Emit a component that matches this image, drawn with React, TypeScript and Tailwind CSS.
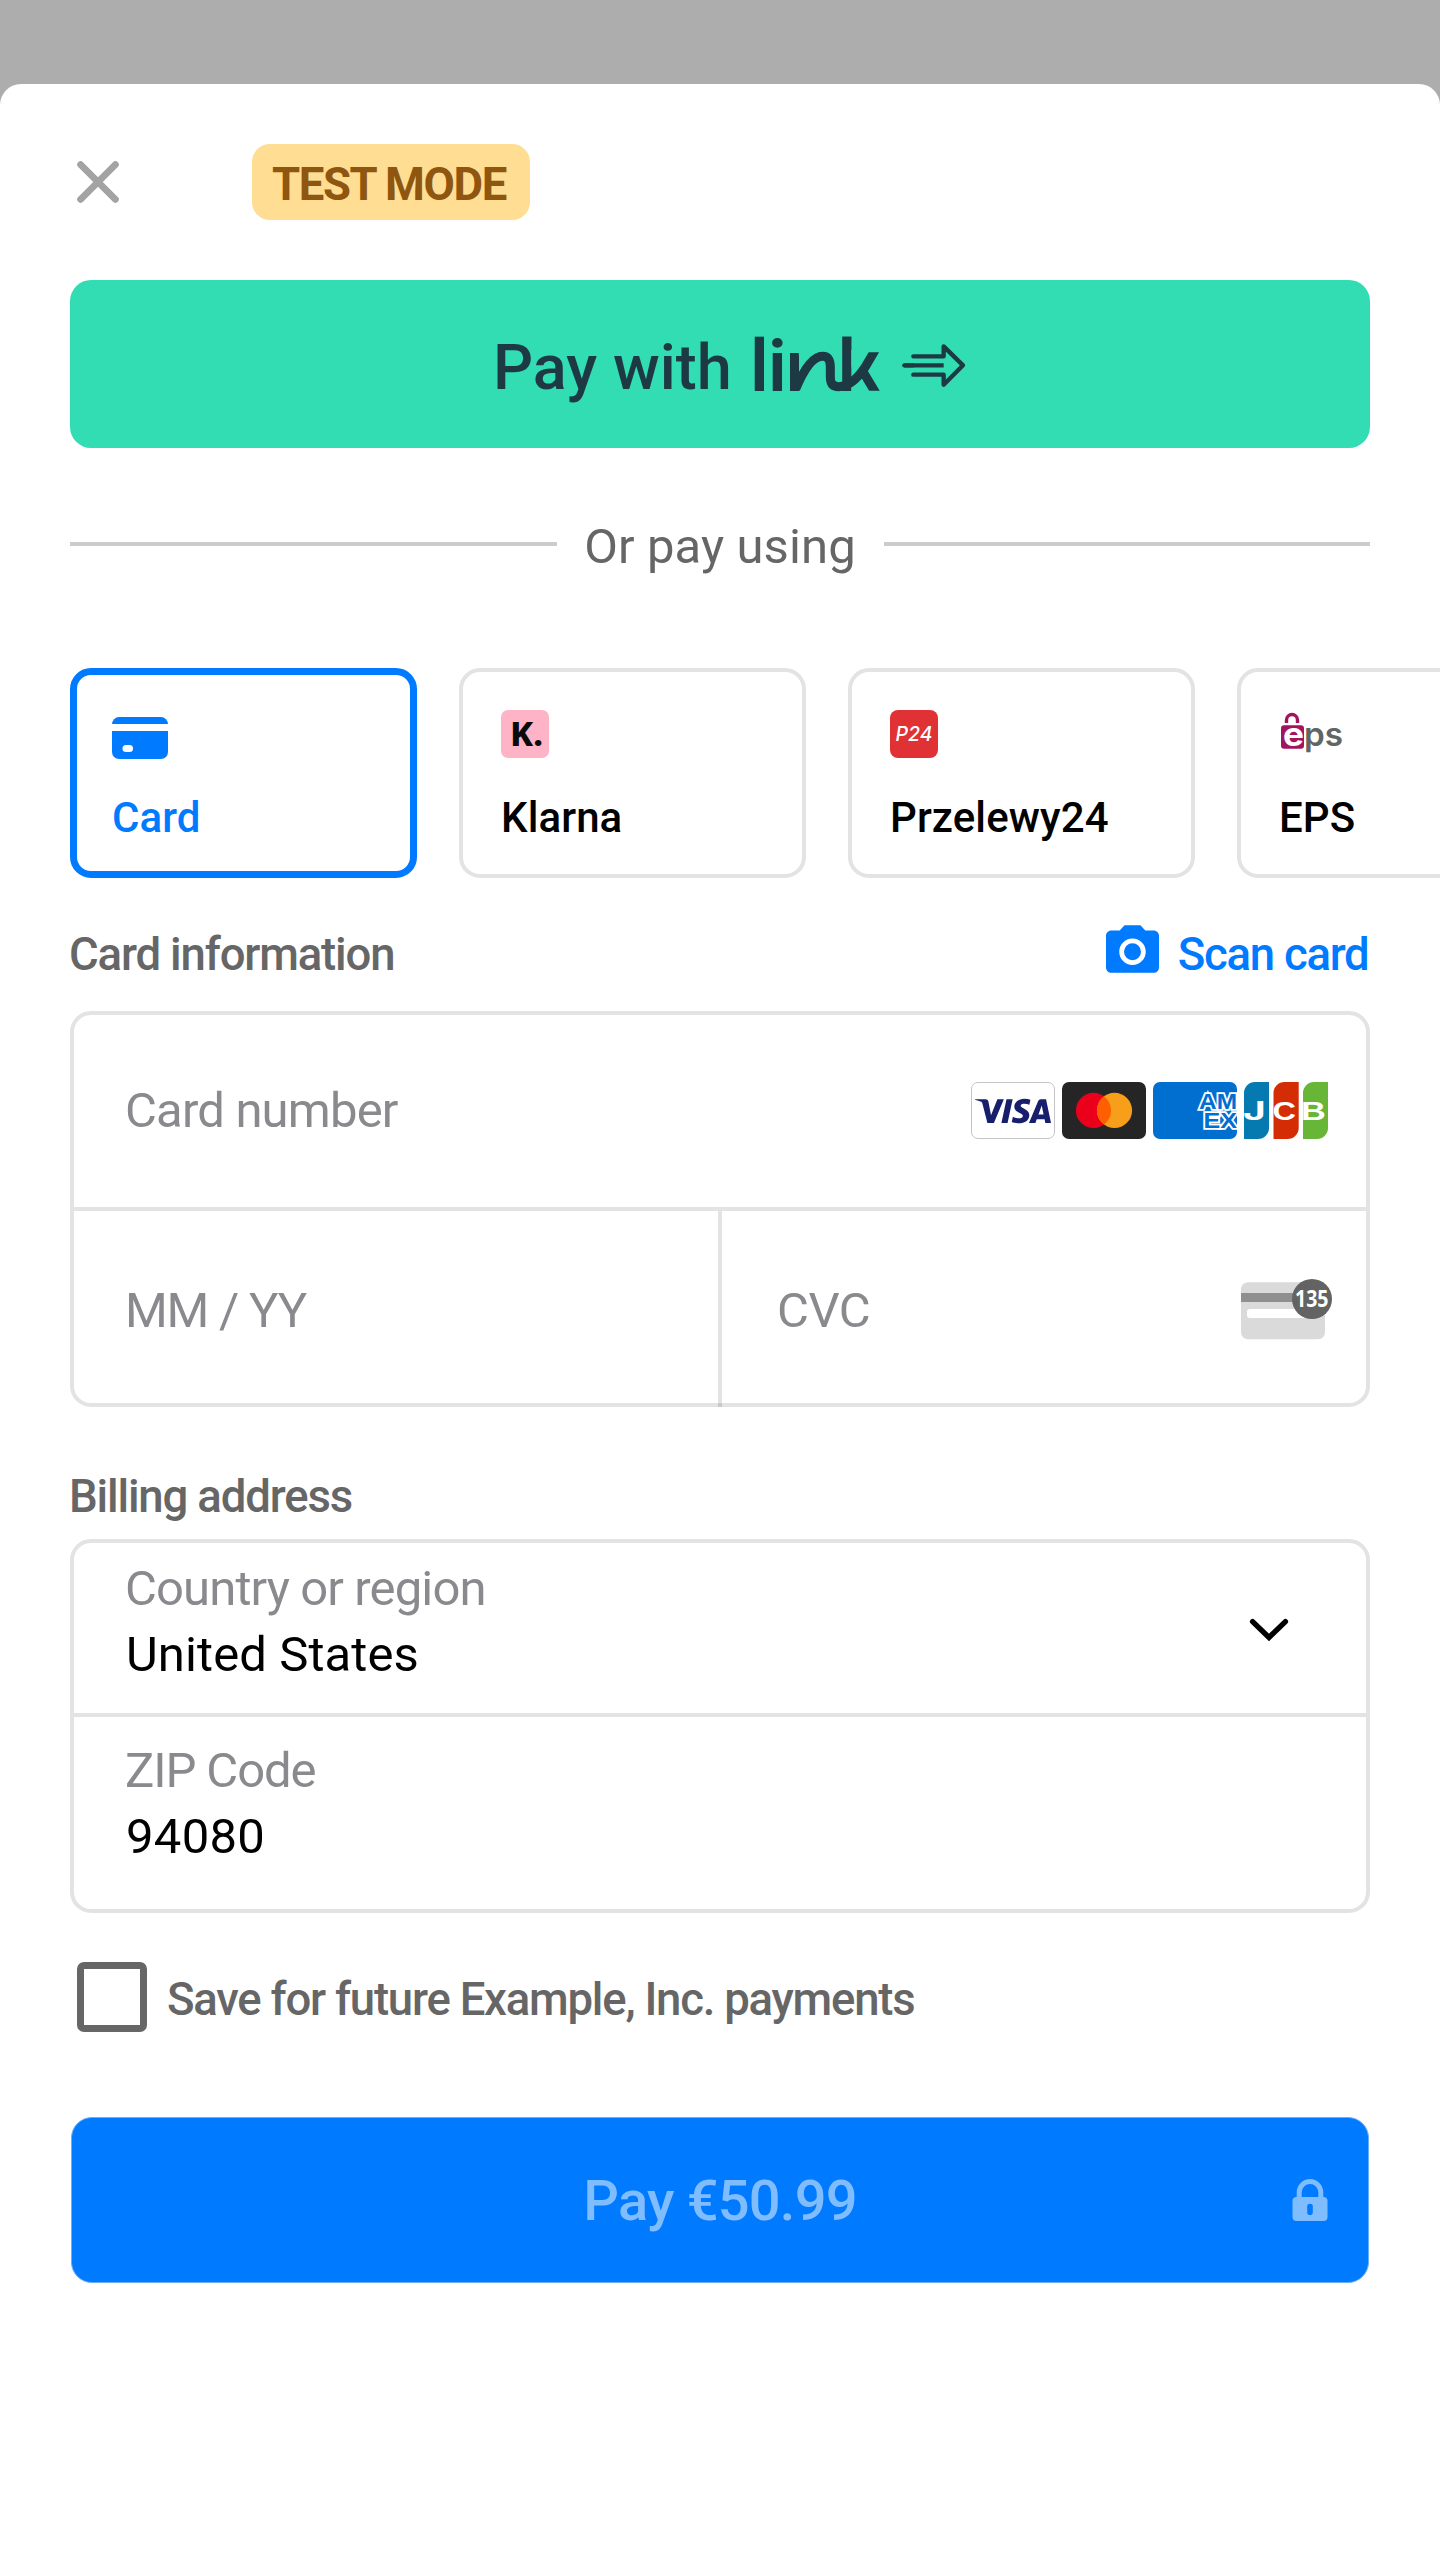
import type { ReactNode } from "react";
import { SiVisa } from "react-icons/si";

function CloseIcon() {
  return (
    <svg className="h-[42px] w-[42px]" viewBox="0 0 42 42" fill="none" stroke="#a3a3a3" strokeWidth="6.8" strokeLinecap="round">
      <path d="M3.6 3.6 38.4 38.4M38.4 3.6 3.6 38.4" />
    </svg>
  );
}

function LinkLogo() {
  return (
    <svg className="mb-[3px] h-[58px] w-[214px] overflow-visible" viewBox="820 38 642 174" fill="none">
      <text x="811 865 919 1075" y="208" fill="#1d3944" fontFamily="Roboto, sans-serif" fontSize="216" fontWeight="650">
        link
      </text>
      <path d="M958 85H1075V214H958ZM1115 85H1215V214H1115Z" fill="#33ddb3" />
      <g stroke="#1d3944" strokeWidth="27">
        <path d="M948 203C966 160 995 104 1029 104.5C1047 105 1052 118 1052 138V166C1052 186 1059 196 1077 196C1108 196 1136 168 1156 138L1190 80" />
        <path d="M1148 148 1189 216" />
      </g>
      <path d="M1117 60H1215V93H1117ZM1125 208H1215V230H1125Z" fill="#33ddb3" />
      <g stroke="#1d3944" strokeWidth="13" strokeLinecap="round" strokeLinejoin="round">
        <path d="M1301 105H1392V75L1450 132L1392 190V160H1301" />
        <path d="M1274 132H1392" strokeLinecap="butt" />
        <path d="M1274 132H1300" />
      </g>
    </svg>
  );
}

function CardIcon() {
  return (
    <svg className="h-[49px] w-[56px] shrink-0" viewBox="0 0 56 49">
      <path d="M0 14.5a7 7.5 0 0 1 7-7.5h42a7 7.5 0 0 1 7 7.5Z" fill="#007aff" />
      <path d="M0 14h56v7H0z" fill="#fff" />
      <path d="M0 21h56v21a7 7 0 0 1-7 7H7a7 7 0 0 1-7-7Z" fill="#007aff" />
      <rect x="10.5" y="35" width="10.5" height="7" rx="3.5" fill="#fff" />
    </svg>
  );
}

function KlarnaIcon() {
  return (
    <svg className="h-12 w-12" viewBox="0 0 48 48">
      <rect width="48" height="48" rx="7" fill="#ffb3c7" />
      <text x="9" y="36" fontFamily="'Noto Sans', sans-serif" fontSize="33.5" fontWeight="800" fill="#0a0a0a" textLength="33" lengthAdjust="spacingAndGlyphs">
        K.
      </text>
    </svg>
  );
}

function P24Icon() {
  return (
    <svg className="h-12 w-12" viewBox="0 0 48 48">
      <rect width="48" height="48" rx="8" fill="#e03134" />
      <text x="5.5" y="31" fontFamily="Inter, sans-serif" fontSize="20" fontStyle="italic" fontWeight="500" fill="#fff" textLength="37" lengthAdjust="spacingAndGlyphs">
        P24
      </text>
    </svg>
  );
}

function EpsIcon() {
  return (
    <svg className="h-12 w-[66px] shrink-0 overflow-visible" viewBox="0 0 66 48">
      <path d="M7.5 13V10a5.5 5.5 0 0 1 11 0v3" fill="none" stroke="#a3145f" strokeWidth="3.4" />
      <rect x="2" y="15.3" width="23" height="23.5" rx="3" fill="#a3145f" />
      <text x="4" y="36" fontFamily="Inter, sans-serif" fontSize="33" fontWeight="700" fill="#fff" textLength="21" lengthAdjust="spacingAndGlyphs">
        e
      </text>
      <text x="25" y="36" fontFamily="Inter, sans-serif" fontSize="32.5" fontWeight="600" fill="#606664" textLength="39" lengthAdjust="spacingAndGlyphs">
        ps
      </text>
    </svg>
  );
}

function CameraIcon() {
  return (
    <svg className="h-[48px] w-[53px]" viewBox="2 2 20 18" fill="#007aff">
      <circle cx="12" cy="12" r="3.2" />
      <path d="M9 2 7.17 4H4c-1.1 0-2 .9-2 2v12c0 1.1.9 2 2 2h16c1.1 0 2-.9 2-2V6c0-1.1-.9-2-2-2h-3.17L15 2H9zm3 15c-2.76 0-5-2.24-5-5s2.24-5 5-5 5 2.24 5 5-2.24 5-5 5z" />
    </svg>
  );
}

function VisaBadge() {
  return (
    <div className="flex h-[57px] w-[84px] items-center justify-center rounded-[7px] border border-[#c4c4c4] bg-white">
      <SiVisa className="h-[76px] w-[76px] shrink-0 text-[#171e6c]" />
    </div>
  );
}

function MastercardBadge() {
  return (
    <svg className="h-[57px] w-[84px]" viewBox="0 0 84 57">
      <rect width="84" height="57" rx="7" fill="#252525" />
      <circle cx="31.5" cy="28.4" r="17.6" fill="#eb001b" />
      <circle cx="52.5" cy="28.4" r="17.6" fill="#f79e1b" />
      <path d="M42 14.3a17.6 17.6 0 0 1 0 28.2a17.6 17.6 0 0 1 0-28.2Z" fill="#ff5f00" />
    </svg>
  );
}

function AmexBadge() {
  return (
    <svg className="h-[57px] w-[84px]" viewBox="0 0 84 57">
      <rect width="84" height="57" rx="7" fill="#016fd0" />
      <g fontFamily="'Liberation Sans', sans-serif" fontSize="22" fontWeight="700" fill="#016fd0" stroke="#fff" strokeWidth="3.4" paintOrder="stroke">
        <text x="46" y="27" textLength="38" lengthAdjust="spacingAndGlyphs">AM</text>
        <text x="50.5" y="45.6" textLength="33.5" lengthAdjust="spacingAndGlyphs">EX</text>
      </g>
    </svg>
  );
}

function JcbBadge() {
  return (
    <svg className="h-[57px] w-[84px]" viewBox="0 0 84 57">
      <path d="M0 11A11 11 0 0 1 11 0H25V46A11 11 0 0 1 14 57H0Z" fill="#047ab1" />
      <path d="M29.5 11a11 11 0 0 1 11-11h14.2v46a11 11 0 0 1-11 11H29.5Z" fill="#d42d06" />
      <path d="M59 11A11 11 0 0 1 70 0H84V46A11 11 0 0 1 73 57H59Z" fill="#67b637" />
      <g fontFamily="'Liberation Sans', sans-serif" fontSize="26" fontWeight="700" fill="#fff">
        <text transform="translate(-1 37.5) scale(1.55 1)" fontFamily="Inter, sans-serif" fontSize="25">J</text>
        <text transform="translate(28.5 37.5) scale(1.25 1)">C</text>
        <text transform="translate(57 37.5) scale(1.32 1)">B</text>
      </g>
    </svg>
  );
}

function CvcIcon() {
  return (
    <svg className="h-[64px] w-[92px]" viewBox="0 0 92 64">
      <rect y="3.3" width="84" height="57" rx="7" fill="#dadada" />
      <rect y="14" width="84" height="9" fill="#8f8f8f" />
      <rect x="6" y="30" width="66" height="9" rx="3" fill="#fff" />
      <circle cx="71" cy="20" r="20" fill="#636363" />
      <text x="54" y="28.2" fontFamily="'Noto Sans', sans-serif" fontSize="23.5" fontWeight="700" fill="#fff" textLength="33.5" lengthAdjust="spacingAndGlyphs">
        135
      </text>
    </svg>
  );
}

function ChevronDown() {
  return (
    <svg className="mt-[3px] h-[24px] w-[40px]" viewBox="0 0 40 24" fill="none" stroke="#000" strokeWidth="5.4" strokeLinecap="round">
      <path d="M3.6 3.6 20 19.4 36.4 3.6" />
    </svg>
  );
}

function LockIcon() {
  return (
    <svg className="h-[42px] w-[36px]" viewBox="0 0 36 42">
      <path d="M7.2 20v-6.7a10.8 10.8 0 0 1 21.6 0V20" fill="none" stroke="#80bdff" strokeWidth="5" />
      <rect x="0.5" y="18" width="35" height="24" rx="4" fill="#80bdff" />
      <rect x="15.2" y="24.8" width="5.6" height="11.2" rx="2.8" fill="#007aff" />
    </svg>
  );
}

function MethodTab({ icon, label, selected = false }: { icon: ReactNode; label: string; selected?: boolean }) {
  return (
    <button
      className={
        selected
          ? "flex h-[210px] w-[346.5px] shrink-0 flex-col items-start rounded-[21px] border-[7px] border-[#007aff] px-[35px] pt-[35px] text-[#007aff]"
          : "flex h-[210px] w-[346.5px] shrink-0 flex-col items-start rounded-[21px] border-4 border-[#e3e3e5] px-[38px] pt-[38px] text-black"
      }
    >
      <span className="flex h-12 items-start">{icon}</span>
      <span className="mt-[39px] text-[42px] leading-none font-medium tracking-[0.1px]">{label}</span>
    </button>
  );
}

export default function App() {
  return (
    <div className="h-[2560px] w-[1440px] overflow-hidden bg-[#adadad] pt-[84px] font-[Roboto,sans-serif]">
      <main className="flex h-full flex-col rounded-t-[21px] bg-white">
        <header className="flex h-[196px] shrink-0 items-center gap-[133px] pl-[77px]">
          <button aria-label="Close">
            <CloseIcon />
          </button>
          <span className="flex h-[76px] w-[278px] items-center rounded-[18px] bg-[#ffde94] pt-[5px] pl-[20px] text-[45.5px] leading-none font-bold tracking-[-1.4px] text-[#8f560f]">
            TEST MODE
          </span>
        </header>

        <button className="mx-[70px] flex h-[168px] shrink-0 items-center gap-[21.5px] rounded-[21px] bg-[#33ddb3] pl-[423px]">
          <span className="pt-[6px] text-[63px] leading-none font-medium text-[#1d3944]">Pay with</span>
          <LinkLogo />
        </button>

        <div className="mx-[70px] mt-[66px] flex h-[60px] shrink-0 items-center">
          <span className="h-1 flex-1 bg-[#cccccc]" />
          <span className="w-[327px] pt-[5px] text-center text-[49px] leading-none tracking-[0.1px] text-[#666666]">Or pay using</span>
          <span className="h-1 flex-1 bg-[#cccccc]" />
        </div>

        <div className="mt-[94px] flex shrink-0 gap-[42.5px] overflow-hidden pl-[70px]">
          <MethodTab icon={<CardIcon />} label="Card" selected />
          <MethodTab icon={<KlarnaIcon />} label="Klarna" />
          <MethodTab icon={<P24Icon />} label="Przelewy24" />
          <MethodTab icon={<EpsIcon />} label="EPS" />
        </div>

        <section className="mx-[70px] shrink-0">
          <div className="flex h-[133px] items-center justify-between pr-[1.5px] text-[45.5px] leading-none font-medium">
            <h2 className="-ml-px pt-[20px] tracking-[-1.15px] text-[#666666]">Card information</h2>
            <button className="flex items-center gap-[19px] text-[#007aff]">
              <span className="pt-[9px]">
                <CameraIcon />
              </span>
              <span className="pt-[20px] tracking-[-1.25px]">Scan card</span>
            </button>
          </div>
          <div className="flex h-[396px] flex-col rounded-[21px] border-4 border-[#e3e3e5] text-[49px] leading-none text-[#8a8a8e]">
            <div className="flex flex-1 items-center justify-between border-b-4 border-[#e3e3e5] pr-[38px] pb-px pl-[51px]">
              <span className="tracking-[-0.82px]">Card number</span>
              <div className="flex gap-[7px]">
                <VisaBadge />
                <MastercardBadge />
                <AmexBadge />
                <JcbBadge />
              </div>
            </div>
            <div className="flex h-[192px]">
              <div className="relative flex w-[648px] items-center border-r-4 border-[#e3e3e5] pt-[7px] pl-[51px]">
                <span className="tracking-[-1.2px]">MM / YY</span>
                <span className="absolute -right-1 -bottom-1 h-1 w-1 bg-[#c9c9cb]" />
              </div>
              <div className="flex flex-1 items-center justify-between pt-[7px] pr-[33px] pl-[55px]">
                <span className="tracking-[-0.5px]">CVC</span>
                <CvcIcon />
              </div>
            </div>
          </div>
        </section>

        <section className="mx-[70px] shrink-0">
          <div className="flex h-[132px] items-center pt-[47px] text-[45.5px] leading-none font-medium tracking-[-1.15px] text-[#666666]">
            <h2 className="-ml-px">Billing address</h2>
          </div>
          <div className="h-[374px] rounded-[21px] border-4 border-[#e3e3e5] text-[49px] leading-[66px] text-black">
            <div className="flex h-[174px] items-center justify-between border-b-4 border-[#e3e3e5] pr-[77px] pl-[51px]">
              <div className="flex h-full flex-col pt-[13px]">
                <span className="tracking-[-0.88px] text-[#8a8a8e]">Country or region</span>
                <span className="pl-px tracking-[0.1px]">United States</span>
              </div>
              <ChevronDown />
            </div>
            <div className="flex flex-col pt-[21px] pl-[51px]">
              <span className="tracking-[-1.1px] text-[#8a8a8e]">ZIP Code</span>
              <span className="pl-px tracking-[0.3px]">94080</span>
            </div>
          </div>
        </section>

        <label className="mt-[49px] ml-[77px] flex h-[70px] shrink-0 items-center gap-[20px]">
          <span className="h-[70px] w-[70px] rounded-[7px] border-[7px] border-[#666666]" />
          <span className="pt-[5px] text-[45.5px] leading-none font-medium tracking-[-1.22px] text-[#666666]">
            Save for future Example, Inc. payments
          </span>
        </label>

        <button className="mx-[71px] mt-[85px] grid h-[166px] shrink-0 grid-cols-[1fr_auto_1fr] items-center rounded-[21px] border border-[#66afff] bg-[#007aff]">
          <span />
          <span className="pt-[2px] text-[56px] leading-none font-medium tracking-[-0.78px] text-[#80bdff]">Pay €50.99</span>
          <span className="mr-[40px] justify-self-end">
            <LockIcon />
          </span>
        </button>
      </main>
    </div>
  );
}
